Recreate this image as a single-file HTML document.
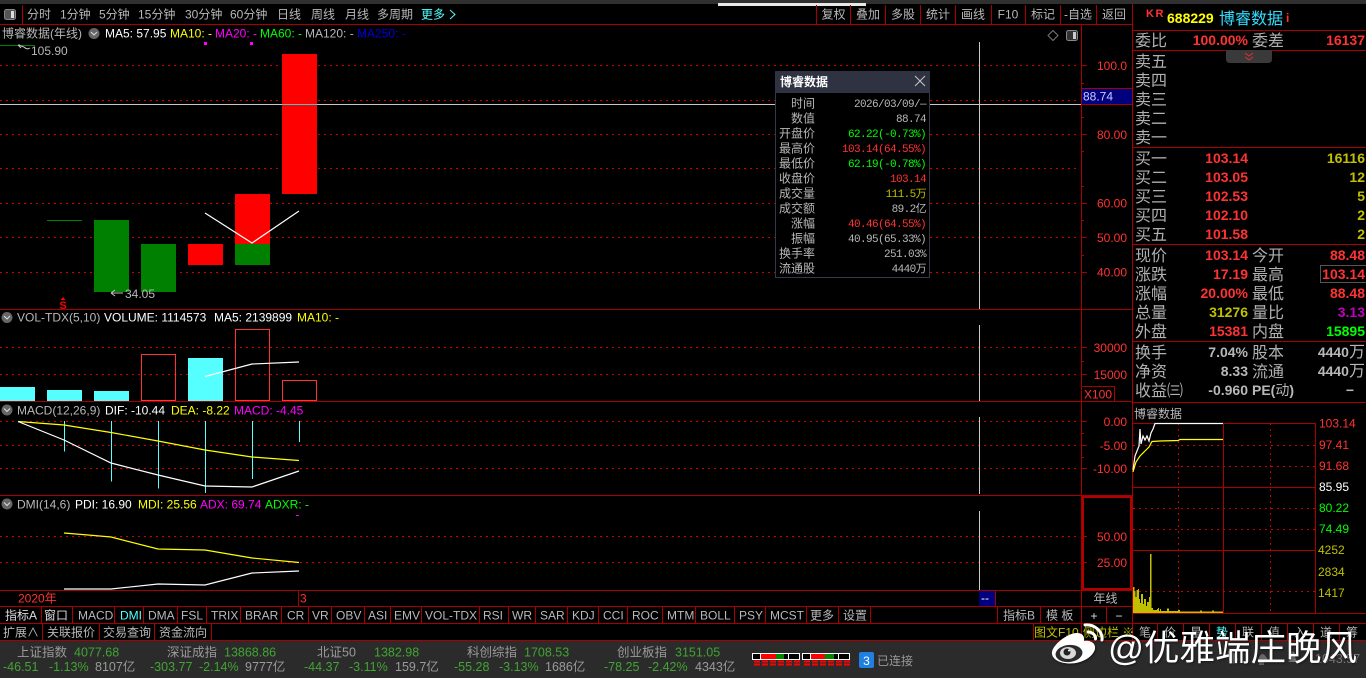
<!DOCTYPE html>
<html><head><meta charset="utf-8"><style>
html,body{margin:0;padding:0;background:#000;width:1366px;height:678px;overflow:hidden}
svg{display:block}
text{font-family:"Liberation Sans","WenQuanYi Zen Hei","Noto Sans CJK SC",sans-serif;font-size:12px;fill:#b8b8b8;white-space:pre}
.l{stroke:#a80000;stroke-width:1;fill:none}
.d{stroke:#d00000;stroke-width:1;stroke-dasharray:2 4;fill:none}
.e{text-anchor:end}.m{text-anchor:middle}
.r{fill:#ff3333}.y{fill:#ffff00}.o{fill:#c0c000}.g{fill:#00ff00}.w{fill:#fff}.p{fill:#ff00ff}.c{fill:#55ffff}.b{fill:#0000e0}
.h{font-size:16px;fill:#b0b0b0}
.n{font-size:14px;font-weight:bold}
.t{font-family:"Liberation Mono","WenQuanYi Zen Hei",monospace;font-size:11px;letter-spacing:-.6px;text-anchor:end}
.s{font-size:12.5px;fill:#9a9a9a}.v{font-size:12.5px;fill:#41a532}
.ln{fill:none;stroke-width:1.2}
</style></head><body>
<svg width="1366" height="678" viewBox="0 0 1366 678" xmlns="http://www.w3.org/2000/svg">
<rect width="1366" height="678" fill="#000"/>
<rect width="1366" height="4" fill="#303030"/>
<rect x="718" y="3" width="148" height="3" fill="#e8e8e8"/>

<!-- chart dotted -->
<g shape-rendering="crispEdges">
<path class="d" d="M0 65.5H1078M0 100.5H1078M0 134.5H1078M0 168.5H1078M0 203.5H1078M0 237.5H1078M0 272.5H1078M0 347.5H1078M0 374.5H1078M0 421.5H1078M0 445.5H1078M0 468.5H1078M0 536.5H1078M0 562.5H1078"/>
<rect x="282" y="54" width="35" height="140" fill="#f00"/>
<rect x="235" y="194" width="35" height="50" fill="#f00"/>
<rect x="235" y="244" width="35" height="21" fill="#008000"/>
<rect x="188" y="244" width="35" height="21" fill="#f00"/>
<rect x="141" y="244" width="35" height="48" fill="#008000"/>
<rect x="94" y="220" width="35" height="72" fill="#008000"/>
<rect x="47" y="220" width="35" height="1" fill="#008000"/>
<rect x="0" y="45" width="35" height="1" fill="#008000"/>
<!-- crosshair -->
<rect x="0" y="104" width="1082" height="1" fill="#c8c8c8"/>
<rect x="282" y="104" width="35" height="1" fill="#40c8c8"/>
<rect x="979" y="42" width="1" height="267" fill="#c8c8c8"/>
<rect x="979" y="325" width="1" height="76" fill="#c8c8c8"/>
<rect x="979" y="417" width="1" height="77" fill="#c8c8c8"/>
<rect x="979" y="511" width="1" height="79" fill="#c8c8c8"/>
<!-- volume -->
<rect x="0" y="387" width="35" height="14" fill="#55ffff"/>
<rect x="47" y="390" width="35" height="11" fill="#55ffff"/>
<rect x="94" y="391" width="35" height="10" fill="#55ffff"/>
<rect x="188" y="358" width="35" height="43" fill="#55ffff"/>
<path d="M141.5 354.5H175.5V400.5H141.5ZM282.5 380.5H316.5V400.5H282.5Z" fill="none" stroke="#ff3333"/>
<path d="M235.5 329.5H269.5V400.5H235.5Z" fill="none" stroke="#ff3333"/>
<!-- macd bars -->
<path d="M64.5 421V451.5M111.5 421V481.5M158.5 421V488.5M205.5 421V493M252.5 421V479M299.5 421V442" stroke="#55ffff" fill="none"/>
</g>
<polyline class="ln" stroke="#fff" points="205,213 252,243 299,211"/>
<polyline class="ln" stroke="#fff" points="205,376.5 252,364 299,362"/>
<polyline class="ln" stroke="#ffff00" points="18,421.5 64,425 111,432.5 158,441 205,450 252,457 299,460.5"/>
<polyline class="ln" stroke="#fff" points="18,421.5 64,440 111,463 158,475 205,486 252,487 299,471"/>
<polyline class="ln" stroke="#ffff00" points="64,533 88,535 111,537 158,549 205,550 252,558 299,562.5"/>
<polyline class="ln" stroke="#fff" points="64,589 111,589 158,584 205,585 252,573 299,571"/>

<!-- structural lines -->
<g shape-rendering="crispEdges">
<path class="l" d="M0 24.5H1132M0 309.5H1132M0 401.5H1132M0 495.5H1132M0 590.5H1132M0 606.5H1132M0 623.5H1366M0 640.5H1366"/>
<path class="l" d="M1081.5 24V623M1132.5 4V640M22.5 5V24M298.5 590V606"/>
<path class="l" d="M816.5 5V24M850.5 5V24M885.5 5V24M920.5 5V24M955.5 5V24M991.5 5V24M1025.5 5V24M1060.5 5V24M1096.5 5V24"/>
<path class="l" d="M1132 30.5H1366M1132 50.5H1366M1132 147.5H1366M1132 244.5H1366M1132 341.5H1366M1132 402.5H1366M1133 423.5H1316M1133 487.5H1316M1133 550.5H1316M1133 613.5H1366M1223.5 423V613M1315.5 423V613"/>
<path class="l" d="M1081 65.5H1087M1081 134.5H1087M1081 203.5H1087M1081 237.5H1087M1081 272.5H1087M1081 83.5H1084M1081 117.5H1084M1081 151.5H1084M1081 186.5H1084M1081 220.5H1084M1081 255.5H1084M1081 347.5H1087M1081 374.5H1087M1081 361.5H1084M1081 421.5H1087M1081 445.5H1087M1081 468.5H1087M1081 433.5H1084M1081 457.5H1084M1081 536.5H1087M1081 562.5H1087M1081 549.5H1084"/>
<path class="l" d="M1082.5 386.5H1114.5V401M1114.5 386V401"/>
<path d="M1083 497H1131V589H1083Z" fill="none" stroke="#b00000" stroke-width="2"/>
<path class="d" d="M1133 445.5H1316M1133 466.5H1316M1133 508.5H1316M1133 529.5H1316M1133 591.5H1316M1178.5 423V613M1270.5 423V613"/>
<path class="l" d="M41.5 606V623M72.5 606V623M114.5 606V623M143.5 606V623M177.5 606V623M206.5 606V623M240.5 606V623M281.5 606V623M308.5 606V623M331.5 606V623M364.5 606V623M390.5 606V623M421.5 606V623M479.5 606V623M508.5 606V623M535.5 606V623M567.5 606V623M598.5 606V623M627.5 606V623M662.5 606V623M695.5 606V623M734.5 606V623M765.5 606V623M806.5 606V623M838.5 606V623M870.5 606V623M997.5 606V623M1040.5 606V623M1106.5 606V623"/>
<path class="l" d="M42.5 623V640M99.5 623V640M154.5 623V640M211.5 623V640M1033.5 623V640M1081.5 623V640M1157.5 623V640M1183.5 623V640M1209.5 623V640M1235.5 623V640M1261.5 623V640M1287.5 623V640M1313.5 623V640M1339.5 623V640"/>
<rect x="1082" y="88" width="50" height="16" fill="#00007f"/>
<path class="l" d="M1082 88.5H1132M1082 104.5H1132"/>
<rect x="979" y="591" width="16" height="15" fill="#00007f"/>
<path class="l" d="M995.5 591V606"/>
<rect x="204" y="42" width="3" height="3" fill="#f0f"/><rect x="250" y="42" width="3" height="3" fill="#f0f"/>
<rect x="296" y="515" width="3" height="1" fill="#f0f"/>
</g>

<!-- intraday -->
<path d="M1133 613V587H1134.5V591H1135.5V597H1136.5V590H1138V589H1139V599H1140V603H1141V594H1143V604H1144V599H1146V606H1147V602H1149V597H1150V554H1151.5V608H1153V610H1157V609H1158V608H1159V611H1160V609H1161V611H1167V608.5H1169V611H1178V610H1180V611.5H1200V610.5H1202V611.5H1212V610.5H1214V611.5H1223V613Z" fill="#c0c000"/>
<polyline class="ln" stroke="#fff" points="1133,470 1135,456 1137,451 1139,446 1140,429 1141,444 1143,436 1145,440 1147,436 1149,441 1151,433 1153,429 1155,423.5 1223,423.5"/>
<polyline class="ln" stroke="#ffff00" points="1133,472 1136,462 1140,456 1145,451 1149,447 1152,441.5 1160,441 1178,440.5 1180,439.5 1223,439.5"/>

<!-- toolbar -->
<rect x="4.5" y="9.5" width="11" height="10" rx="2" fill="#555" stroke="#888"/><rect x="11" y="11" width="3" height="7" fill="#ddd"/>
<g>
<text x="27" y="18.5">分时</text><text x="60" y="18.5">1分钟</text><text x="99" y="18.5">5分钟</text><text x="138" y="18.5">15分钟</text><text x="185" y="18.5">30分钟</text><text x="230" y="18.5">60分钟</text><text x="277" y="18.5">日线</text><text x="311" y="18.5">周线</text><text x="345" y="18.5">月线</text><text x="377" y="18.5">多周期</text><text x="421" y="18.5" class="c">更多</text>
<text x="833.5" y="18.5" class="m">复权</text><text x="868" y="18.5" class="m">叠加</text><text x="903" y="18.5" class="m">多股</text><text x="938" y="18.5" class="m">统计</text><text x="973" y="18.5" class="m">画线</text><text x="1008" y="18.5" class="m">F10</text><text x="1043" y="18.5" class="m">标记</text><text x="1078" y="18.5" class="m">-自选</text><text x="1114" y="18.5" class="m">返回</text>
</g>
<path d="M450 10L455 14.5L450 19" fill="none" stroke="#55ffff"/>

<!-- panel 1 header -->
<text x="2" y="37.5">博睿数据(年线)</text>
<circle cx="94" cy="33.5" r="5.5" fill="#666"/><path d="M91 32L94 35L97 32" fill="none" stroke="#ddd"/>
<text x="105" y="37.5" class="w">MA5: 57.95</text><text x="170" y="37.5" class="y">MA10: -</text><text x="215" y="37.5" class="p">MA20: -</text><text x="260" y="37.5" class="g">MA60: -</text><text x="305" y="37.5">MA120: -</text><text x="357" y="37.5" class="b">MA250: -</text>
<path d="M1053 30.5L1058 35.5L1053 40.5L1048 35.5Z" fill="none" stroke="#777"/>
<rect x="1066.5" y="30.5" width="11" height="10" rx="2" fill="#333" stroke="#888"/><rect x="1073" y="32" width="3" height="7" fill="#ccc"/>
<path d="M18 45L24 47M18 45L21 48M18 45H20M24 47Q27 50 30 48" fill="none" stroke="#c0c0c0"/>
<text x="31" y="55">105.90</text>
<path d="M123 293H111M111 293L115 290M111 293L115 296" fill="none" stroke="#c0c0c0"/>
<text x="125" y="298">34.05</text>
<path d="M63 297L65.5 300H60.5Z" fill="#f00"/>
<text x="63" y="309" class="m" style="font-size:11px;font-weight:bold;fill:#f00">S</text>

<!-- panel 2-4 headers -->
<circle cx="7" cy="317.5" r="5.5" fill="#666"/><path d="M4 316L7 319L10 316" fill="none" stroke="#ddd"/>
<text x="17" y="321.5">VOL-TDX(5,10)</text><text x="104" y="321.5" class="w">VOLUME: 1114573</text><text x="214" y="321.5" class="w">MA5: 2139899</text><text x="297" y="321.5" class="y">MA10: -</text>
<circle cx="7" cy="410" r="5.5" fill="#666"/><path d="M4 408.5L7 411.5L10 408.5" fill="none" stroke="#ddd"/>
<text x="17" y="414.5">MACD(12,26,9)</text><text x="105" y="414.5" class="w">DIF: -10.44</text><text x="171" y="414.5" class="y">DEA: -8.22</text><text x="234" y="414.5" class="p">MACD: -4.45</text>
<circle cx="7" cy="504" r="5.5" fill="#666"/><path d="M4 502.5L7 505.5L10 502.5" fill="none" stroke="#ddd"/>
<text x="17" y="508.5">DMI(14,6)</text><text x="75" y="508.5" class="w">PDI: 16.90</text><text x="138" y="508.5" class="y">MDI: 25.56</text><text x="200" y="508.5" class="p">ADX: 69.74</text><text x="265" y="508.5" class="g">ADXR: -</text>

<!-- axis labels -->
<g class="r">
<text x="1127" y="70" class="e r">100.0</text><text x="1127" y="139" class="e r">80.00</text><text x="1127" y="207.5" class="e r">60.00</text><text x="1127" y="242" class="e r">50.00</text><text x="1127" y="276.5" class="e r">40.00</text>
<text x="1127" y="352" class="e r">30000</text><text x="1127" y="379" class="e r">15000</text><text x="1084" y="398.5" class="r">X100</text>
<text x="1127" y="426" class="e r">0.00</text><text x="1127" y="450" class="e r">-5.00</text><text x="1127" y="473" class="e r">-10.00</text>
<text x="1127" y="541" class="e r">50.00</text><text x="1127" y="567" class="e r">25.00</text>
</g>
<text x="1083" y="100.5" style="fill:#c8c8ff">88.74</text>
<text x="18" y="602.5" class="r">2020年</text><text x="300" y="602.5" class="r">3</text>
<text x="981" y="602" class="w">--</text>
<text x="1105.5" y="602.5" class="m">年线</text>
<text x="1094" y="620" class="m" style="fill:#ddd">+</text><text x="1119" y="620" class="m" style="fill:#ddd">−</text>

<!-- tab row 1 -->
<text x="5" y="619.5" style="fill:#ddd">指标A</text><text x="44" y="619.5" style="fill:#ddd">窗口</text><text x="78" y="619.5">MACD</text><text x="120" y="619.5" class="c">DMI</text><text x="148" y="619.5">DMA</text><text x="181" y="619.5">FSL</text><text x="211" y="619.5">TRIX</text><text x="245" y="619.5">BRAR</text><text x="287" y="619.5">CR</text><text x="312" y="619.5">VR</text><text x="336" y="619.5">OBV</text><text x="368" y="619.5">ASI</text><text x="394" y="619.5">EMV</text><text x="425" y="619.5">VOL-TDX</text><text x="483" y="619.5">RSI</text><text x="512" y="619.5">WR</text><text x="540" y="619.5">SAR</text><text x="572" y="619.5">KDJ</text><text x="603" y="619.5">CCI</text><text x="632" y="619.5">ROC</text><text x="667" y="619.5">MTM</text><text x="700" y="619.5">BOLL</text><text x="739" y="619.5">PSY</text><text x="770" y="619.5">MCST</text><text x="810" y="619.5">更多</text><text x="843" y="619.5">设置</text><text x="1003" y="619.5">指标B</text><text x="1046" y="619.5">模 板</text>
<!-- tab row 2 -->
<text x="3" y="636.5">扩展∧</text><text x="47" y="636.5">关联报价</text><text x="103" y="636.5">交易查询</text><text x="159" y="636.5">资金流向</text>
<text x="1034" y="636.5" class="o">图文F10</text><text x="1083" y="636.5" class="o">侧边栏 ※</text>
<text x="1145" y="636.5" class="m">笔</text><text x="1170" y="636.5" class="m">价</text><text x="1196" y="636.5" class="m">星</text><text x="1222" y="636.5" class="m c">势</text><text x="1248" y="636.5" class="m">联</text><text x="1274" y="636.5" class="m">值</text><text x="1300" y="636.5" class="m">入</text><text x="1326" y="636.5" class="m">道</text><text x="1352" y="636.5" class="m">筹</text>

<!-- right header -->
<text x="1146" y="17" class="r" style="font-size:11px;font-weight:bold;letter-spacing:1.5px">KR</text>
<text x="1167" y="23" class="y n">688229</text>
<text x="1219" y="24" class="h" style="fill:#33ddff">博睿数据</text>
<text x="1286" y="22" class="r" style="font-weight:bold">i</text>
<text x="1135" y="46" class="h">委比</text><text x="1248" y="45" class="n e r">100.00%</text><text x="1252" y="46" class="h">委差</text><text x="1365" y="45" class="n e r">16137</text>
<path d="M1226 50H1272V59Q1272 63 1268 63H1230Q1226 63 1226 59Z" fill="#3a3a3a"/>
<path d="M1245 53L1249 56L1253 53M1245 57L1249 60L1253 57" fill="none" stroke="#e03030"/>
<text x="1135" y="67" class="h">卖五</text><text x="1135" y="86" class="h">卖四</text><text x="1135" y="105" class="h">卖三</text><text x="1135" y="124" class="h">卖二</text><text x="1135" y="143" class="h">卖一</text>
<text x="1135" y="164" class="h">买一</text><text x="1248" y="163" class="n e r">103.14</text><text x="1365" y="163" class="n e o">16116</text>
<text x="1135" y="183" class="h">买二</text><text x="1248" y="182" class="n e r">103.05</text><text x="1365" y="182" class="n e o">12</text>
<text x="1135" y="202" class="h">买三</text><text x="1248" y="201" class="n e r">102.53</text><text x="1365" y="201" class="n e o">5</text>
<text x="1135" y="221" class="h">买四</text><text x="1248" y="220" class="n e r">102.10</text><text x="1365" y="220" class="n e o">2</text>
<text x="1135" y="240" class="h">买五</text><text x="1248" y="239" class="n e r">101.58</text><text x="1365" y="239" class="n e o">2</text>

<text x="1135" y="261" class="h">现价</text><text x="1248" y="260" class="n e r">103.14</text><text x="1252" y="261" class="h">今开</text><text x="1365" y="260" class="n e r">88.48</text>
<text x="1135" y="280" class="h">涨跌</text><text x="1248" y="279" class="n e r">17.19</text><text x="1252" y="280" class="h">最高</text><text x="1365" y="279" class="n e r">103.14</text>
<rect x="1320.5" y="265.5" width="46" height="17" fill="none" stroke="#555"/>
<text x="1135" y="299" class="h">涨幅</text><text x="1248" y="298" class="n e r">20.00%</text><text x="1252" y="299" class="h">最低</text><text x="1365" y="298" class="n e r">88.48</text>
<text x="1135" y="318" class="h">总量</text><text x="1248" y="317" class="n e o">31276</text><text x="1252" y="318" class="h">量比</text><text x="1365" y="317" class="n e" style="fill:#c000c0">3.13</text>
<text x="1135" y="337" class="h">外盘</text><text x="1248" y="336" class="n e r">15381</text><text x="1252" y="337" class="h">内盘</text><text x="1365" y="336" class="n e g">15895</text>

<text x="1135" y="358" class="h">换手</text><text x="1248" y="357" class="n e">7.04%</text><text x="1252" y="358" class="h">股本</text><text x="1365" y="357" class="n e">4440<tspan style="font-size:16px;font-weight:normal">万</tspan></text>
<text x="1135" y="377" class="h">净资</text><text x="1248" y="376" class="n e">8.33</text><text x="1252" y="377" class="h">流通</text><text x="1365" y="376" class="n e">4440<tspan style="font-size:16px;font-weight:normal">万</tspan></text>
<text x="1135" y="396" class="h">收益㈢</text><text x="1248" y="395" class="n e">-0.960</text><text x="1252" y="395" class="n">PE(<tspan style="font-size:14px;font-weight:normal">动</tspan>)</text><text x="1354" y="395" class="n e">−</text>
<text x="1134" y="418">博睿数据</text>

<!-- intraday labels -->
<text x="1319" y="427.5" class="r">103.14</text><text x="1319" y="449" class="r">97.41</text><text x="1319" y="470" class="r">91.68</text><text x="1319" y="491" class="w">85.95</text><text x="1319" y="512" class="g">80.22</text><text x="1319" y="533" class="g">74.49</text><text x="1318" y="554" class="o">4252</text><text x="1318" y="576" class="o">2834</text><text x="1318" y="597" class="o">1417</text>

<!-- popup -->
<rect x="775.5" y="71.5" width="154" height="206" fill="#000" stroke="#343848"/>
<rect x="775" y="71" width="155" height="22" fill="#2f3341"/>
<text x="780" y="86" class="w" style="font-weight:bold">博睿数据</text>
<path d="M915 76L925 86M925 76L915 86" stroke="#c8c8c8" fill="none"/>
<g>
<text x="815" y="107.5" class="e">时间</text><text x="926" y="107" class="t">2026/03/09/—</text>
<text x="815" y="122.5" class="e">数值</text><text x="926" y="122" class="t">88.74</text>
<text x="815" y="137.5" class="e">开盘价</text><text x="926" y="137" class="t g">62.22(-0.73%)</text>
<text x="815" y="152.5" class="e">最高价</text><text x="926" y="152" class="t r">103.14(64.55%)</text>
<text x="815" y="167.5" class="e">最低价</text><text x="926" y="167" class="t g">62.19(-0.78%)</text>
<text x="815" y="182.5" class="e">收盘价</text><text x="926" y="182" class="t r">103.14</text>
<text x="815" y="197.5" class="e">成交量</text><text x="926" y="197" class="t o">111.5万</text>
<text x="815" y="212.5" class="e">成交额</text><text x="926" y="212" class="t">89.2亿</text>
<text x="815" y="227.5" class="e">涨幅</text><text x="926" y="227" class="t r">40.46(64.55%)</text>
<text x="815" y="242.5" class="e">振幅</text><text x="926" y="242" class="t">40.95(65.33%)</text>
<text x="815" y="257.5" class="e">换手率</text><text x="926" y="257" class="t">251.03%</text>
<text x="815" y="272.5" class="e">流通股</text><text x="926" y="272" class="t">4440万</text>
</g>

<!-- status bar -->
<rect x="0" y="641" width="1366" height="37" fill="#2b2b2b"/>
<text x="17" y="656.5" class="s">上证指数</text><text x="74" y="656.5" class="v">4077.68</text>
<text x="167" y="656.5" class="s">深证成指</text><text x="224" y="656.5" class="v">13868.86</text>
<text x="317" y="656.5" class="s">北证50</text><text x="374" y="656.5" class="v">1382.98</text>
<text x="467" y="656.5" class="s">科创综指</text><text x="524" y="656.5" class="v">1708.53</text>
<text x="617" y="656.5" class="s">创业板指</text><text x="675" y="656.5" class="v">3151.05</text>
<text x="3" y="671" class="v">-46.51</text><text x="49" y="671" class="v">-1.13%</text><text x="95" y="671" class="s">8107亿</text>
<text x="150" y="671" class="v">-303.77</text><text x="199" y="671" class="v">-2.14%</text><text x="245" y="671" class="s">9777亿</text>
<text x="304" y="671" class="v">-44.37</text><text x="349" y="671" class="v">-3.11%</text><text x="395" y="671" class="s">159.7亿</text>
<text x="454" y="671" class="v">-55.28</text><text x="499" y="671" class="v">-3.13%</text><text x="545" y="671" class="s">1686亿</text>
<text x="604" y="671" class="v">-78.25</text><text x="648" y="671" class="v">-2.42%</text><text x="695" y="671" class="s">4343亿</text>
<g shape-rendering="crispEdges">
<rect x="752.5" y="653.5" width="47" height="6" fill="#000" stroke="#fff"/><rect x="761" y="654" width="15" height="5" fill="#f00"/><rect x="776" y="654" width="8" height="5" fill="#080"/><path d="M760.5 654V659M788.5 654V659" stroke="#fff"/>
<rect x="802.5" y="653.5" width="47" height="6" fill="#000" stroke="#fff"/><rect x="811" y="654" width="14" height="5" fill="#f00"/><rect x="825" y="654" width="9" height="5" fill="#080"/><path d="M810.5 654V659M838.5 654V659" stroke="#fff"/>
<path d="M754 661.5H800M754 664.5H800M804 661.5H850M804 664.5H850" stroke="#f00" stroke-width="2" stroke-dasharray="6 2" fill="none"/>
</g>
<rect x="859" y="652" width="15" height="16" rx="2" fill="#2080e0"/>
<text x="866.5" y="665" class="m w" style="font-size:12px">3</text>
<text x="877" y="665" style="font-size:12px;fill:#999">已连接</text>
<path d="M1228 651Q1236 651 1238 660L1233 664L1229 660Z" fill="#666"/>
<path d="M1258 660Q1262 648 1268 660L1264 662V665H1259V662Z" fill="#666"/>
<path d="M1288 662Q1291 660 1291 654Q1293 649 1295 654Q1295 660 1298 662Z" fill="#777"/>
<text x="1315" y="663" style="font-size:12.5px;fill:#777">1043.57</text>

<!-- watermark -->
<g style="filter:drop-shadow(1px 1px 1px rgba(0,0,0,.5))">
<path d="M1052 652C1053 645 1066 634 1076 633C1082 632.500 1085 636 1084 641C1090 640 1096 643 1095 649C1093 657 1082 663.500 1070 663.500C1060 663.500 1051 659 1052 652Z" fill="#fff"/>
<ellipse cx="1069" cy="653.500" rx="13.500" ry="8.500" fill="#2b2b2b" transform="rotate(-6 1069 653.500)"/>
<ellipse cx="1068" cy="653" rx="8" ry="6" fill="#d8d8d8"/>
<circle cx="1067" cy="652" r="3.500" fill="#222"/>
<circle cx="1069" cy="650.500" r="1" fill="#fff"/>
<path d="M1085 625C1094 624 1103 631 1102 640M1088 632C1092 632 1096 635 1095.500 639" fill="none" stroke="#fff" stroke-width="3" stroke-linecap="round"/>
<text x="1108" y="660" style="font-family:'Liberation Sans','Noto Sans CJK SC',sans-serif;font-size:35.500px;fill:#fff">@优雅端庄晚风</text>
</g>
</svg>
</body></html>
